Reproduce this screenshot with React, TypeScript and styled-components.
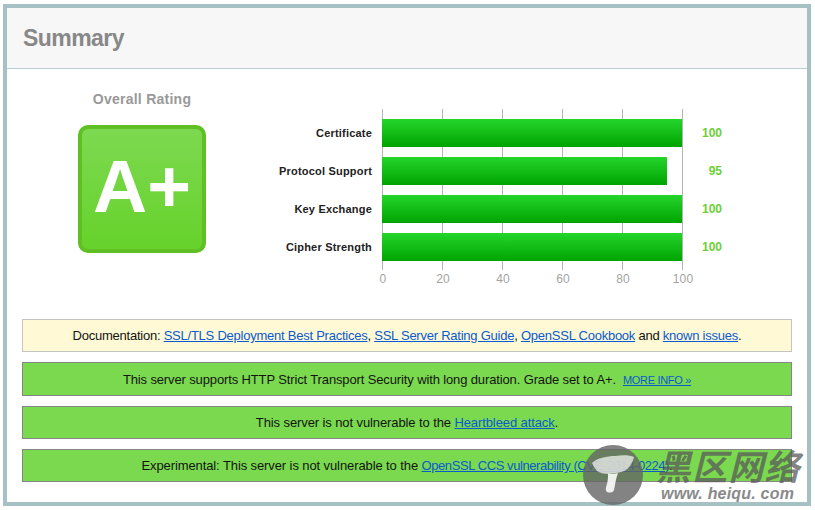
import styled, { createGlobalStyle } from 'styled-components';

const GlobalStyle = createGlobalStyle`
  html, body {
    margin: 0;
    padding: 0;
    background: #fff;
    font-family: "Liberation Sans", Arial, sans-serif;
  }
`;

const Page = styled.div`
  position: relative;
  width: 815px;
  height: 510px;
  padding: 4px 4px 4px 3px;
  box-sizing: border-box;
  overflow: hidden;
`;

const Panel = styled.div`
  height: 100%;
  box-sizing: border-box;
  border: 4px solid #a6c1c4;
  background: #fff;
`;

const Header = styled.div`
  height: 61px;
  box-sizing: border-box;
  padding: 15px 0 0 16px;
  background: #f7f7f7;
  border-bottom: 1px solid #b9cdd0;
`;

const Title = styled.h1`
  margin: 0;
  font-size: 23px;
  line-height: 30px;
  font-weight: bold;
  letter-spacing: -0.55px;
  color: #888;
`;

const Body = styled.div`
  padding: 0 15px;
`;

const Overview = styled.div`
  display: flex;
  height: 250px;
`;

const RatingBox = styled.div`
  width: 240px;
  display: flex;
  flex-direction: column;
  align-items: center;
  padding-top: 20px;
`;

const RatingLabel = styled.div`
  font-size: 14px;
  line-height: 20px;
  font-weight: bold;
  color: #999;
  letter-spacing: 0.25px;
  margin-bottom: 16px;
`;

const Grade = styled.div`
  width: 128px;
  height: 128px;
  box-sizing: border-box;
  border: 4px solid #5fbf24;
  border-radius: 10px;
  background: linear-gradient(#7dd950, #66d22b);
  color: #fff;
  font-size: 75px;
  font-weight: bold;
  line-height: 114px;
  text-align: center;
`;

const Chart = styled.div`
  display: flex;
  padding-top: 40px;
`;

const Labels = styled.div`
  width: 120px;
  padding: 10px 10px 0 0;
  box-sizing: border-box;
  display: flex;
  flex-direction: column;
  gap: 10px;
`;

const BarLabel = styled.div`
  height: 28px;
  line-height: 28px;
  font-size: 11px;
  font-weight: bold;
  letter-spacing: 0.2px;
  color: #222;
  text-align: right;
  white-space: nowrap;
`;

const PlotColumn = styled.div`
  width: 301px;
`;

const Plot = styled.div`
  height: 161px;
  box-sizing: border-box;
  padding-top: 10px;
  display: flex;
  flex-direction: column;
  gap: 10px;
  background-image: linear-gradient(to right, #b4b4b4 1px, transparent 1px);
  background-size: 60px 100%;
`;

const Bar = styled.div<{ $percent: number }>`
  height: 28px;
  width: ${(p) => p.$percent * 3}px;
  background: linear-gradient(#25d52b, #00a400);
`;

const Axis = styled.div`
  display: flex;
  width: 360px;
  margin: 1px 0 0 -30px;
`;

const Tick = styled.div`
  width: 60px;
  text-align: center;
  font-size: 12px;
  line-height: 16px;
  letter-spacing: 0.1px;
  color: #a3a3a3;
  margin-left: 1px;
  margin-right: -1px;
`;

const Values = styled.div`
  width: 39px;
  padding-top: 10px;
  display: flex;
  flex-direction: column;
  gap: 10px;
`;

const BarValue = styled.div`
  height: 28px;
  line-height: 28px;
  font-size: 12px;
  font-weight: bold;
  color: #6bd036;
  text-align: right;
`;

const Notices = styled.div`
  display: flex;
  flex-direction: column;
  gap: 10px;
`;

const Notice = styled.div<{ $tone: 'info' | 'good'; $height: number; $tracking: number }>`
  height: ${(p) => p.$height}px;
  box-sizing: border-box;
  display: flex;
  align-items: center;
  justify-content: center;
  white-space: pre;
  font-size: 13px;
  letter-spacing: ${(p) => p.$tracking}px;
  color: #141414;
  background: ${(p) => (p.$tone === 'info' ? '#fff9d5' : '#7ad94e')};
  border: 1px solid ${(p) => (p.$tone === 'info' ? '#c4c4c0' : '#868686')};
`;

const Link = styled.a`
  color: #0a5ad2;
  text-decoration: underline;
`;

const TightLink = styled(Link)`
  letter-spacing: -0.42px;
`;

const MoreInfo = styled(Link)`
  font-size: 11px;
  letter-spacing: -0.3px;
  margin-left: 7px;
`;

const Watermark = styled.div`
  position: absolute;
  left: 583px;
  top: 445px;
  width: 225px;
  height: 60px;
  display: flex;
  gap: 13px;
  pointer-events: none;
`;

const WatermarkText = styled.div`
  display: flex;
  flex-direction: column;
`;

const WatermarkName = styled.div`
  font-family: "Noto Sans CJK SC", sans-serif;
  font-size: 35px;
  line-height: 40px;
  font-weight: 700;
  font-style: italic;
  letter-spacing: 1.2px;
  color: rgba(90, 90, 90, 0.75);
  white-space: nowrap;
`;

const WatermarkUrl = styled.div`
  font-size: 16px;
  line-height: 18px;
  font-weight: bold;
  font-style: italic;
  letter-spacing: 0.2px;
  color: #8a8a8a;
  padding-left: 5px;
  white-space: pre;
`;

const bars = [
  { name: 'Certificate', score: 100 },
  { name: 'Protocol Support', score: 95 },
  { name: 'Key Exchange', score: 100 },
  { name: 'Cipher Strength', score: 100 },
];

const ticks = [0, 20, 40, 60, 80, 100];

function MushroomLogo() {
  return (
    <svg width="60" height="60" viewBox="0 0 60 60">
      <circle cx="30" cy="30" r="30" fill="#646464" fillOpacity="0.8" />
      <path
        d="M9 18 C14 13 24 11 32 11 C39 10 47 10 51 12 C50 17 47 22 43 25 C38 28 32 28 26 29 C21 29 17 28 14 26 C12 23 10 21 9 18 Z"
        fill="#fff"
        fillOpacity="0.68"
      />
      <path
        d="M25 29 C28 29 32 29 35 28 C33 33 32 40 31 45 C30 48 26 48 24 47 C22 45 23 42 24 39 C25 35 25 32 25 29 Z"
        fill="#fff"
        fillOpacity="0.88"
      />
    </svg>
  );
}

export default function App() {
  return (
    <Page>
      <GlobalStyle />
      <Panel>
        <Header>
          <Title>Summary</Title>
        </Header>
        <Body>
          <Overview>
            <RatingBox>
              <RatingLabel>Overall Rating</RatingLabel>
              <Grade>A+</Grade>
            </RatingBox>
            <Chart>
              <Labels>
                {bars.map((b) => (
                  <BarLabel key={b.name}>{b.name}</BarLabel>
                ))}
              </Labels>
              <PlotColumn>
                <Plot>
                  {bars.map((b) => (
                    <Bar key={b.name} $percent={b.score} />
                  ))}
                </Plot>
                <Axis>
                  {ticks.map((t) => (
                    <Tick key={t}>{t}</Tick>
                  ))}
                </Axis>
              </PlotColumn>
              <Values>
                {bars.map((b) => (
                  <BarValue key={b.name}>{b.score}</BarValue>
                ))}
              </Values>
            </Chart>
          </Overview>
          <Notices>
            <Notice $tone="info" $height={33} $tracking={-0.24}>
              <span>
                Documentation: <Link href="#">SSL/TLS Deployment Best Practices</Link>,{' '}
                <Link href="#">SSL Server Rating Guide</Link>, <Link href="#">OpenSSL Cookbook</Link> and{' '}
                <Link href="#">known issues</Link>.
              </span>
            </Notice>
            <Notice $tone="good" $height={34} $tracking={-0.13}>
              <span>
                This server supports HTTP Strict Transport Security with long duration. Grade set to A+.
                <MoreInfo href="#">MORE INFO »</MoreInfo>
              </span>
            </Notice>
            <Notice $tone="good" $height={33} $tracking={-0.1}>
              <span>
                This server is not vulnerable to the <Link href="#">Heartbleed attack</Link>.
              </span>
            </Notice>
            <Notice $tone="good" $height={33} $tracking={-0.1}>
              <span>
                Experimental: This server is not vulnerable to the{' '}
                <TightLink href="#">OpenSSL CCS vulnerability (CVE-2014-0224)</TightLink>.
              </span>
            </Notice>
          </Notices>
        </Body>
      </Panel>
      <Watermark>
        <MushroomLogo />
        <WatermarkText>
          <WatermarkName>黑区网络</WatermarkName>
          <WatermarkUrl>www. heiqu. com</WatermarkUrl>
        </WatermarkText>
      </Watermark>
    </Page>
  );
}
